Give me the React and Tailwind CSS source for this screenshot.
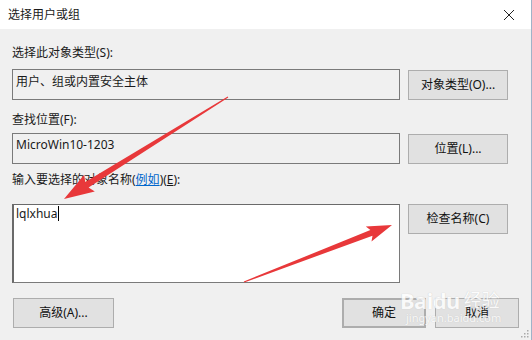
import React from "react";

const font = { fontFamily: "'Noto Sans', 'Noto Sans CJK SC', sans-serif" };

function arrowPoints(tail, tip, headLen, headHalf, shaftTail, shaftHead) {
  const dx = tip[0] - tail[0];
  const dy = tip[1] - tail[1];
  const len = Math.hypot(dx, dy);
  const ux = dx / len;
  const uy = dy / len;
  const px = -uy;
  const py = ux;
  const bx = tip[0] - ux * headLen;
  const by = tip[1] - uy * headLen;
  const pts = [
    [tail[0] + px * shaftTail, tail[1] + py * shaftTail],
    [bx + px * shaftHead, by + py * shaftHead],
    [bx + px * headHalf - ux * 3, by + py * headHalf - uy * 3],
    tip,
    [bx - px * headHalf - ux * 3, by - py * headHalf - uy * 3],
    [bx - px * shaftHead, by - py * shaftHead],
    [tail[0] - px * shaftTail, tail[1] - py * shaftTail],
  ];
  return pts.map((p) => p.map((n) => n.toFixed(1)).join(",")).join(" ");
}

function Button({ children, className = "" }) {
  return (
    <div
      className={`flex items-center justify-center h-[30px] bg-[#e1e1e1] border border-[#adadad] text-[12px] text-[#111] ${className}`}
    >
      {children}
    </div>
  );
}

export default function App() {
  return (
    <div
      className="relative w-[532px] h-[340px] bg-[#f0f0f0] border-r border-[#9fb3c8] overflow-hidden text-[#1a1a1a]"
      style={font}
    >
      {/* title bar */}
      <div className="h-[29px] bg-white flex items-center justify-between pl-2 pr-[10px]">
        <span className="text-[12px] leading-4">选择用户或组</span>
        <svg width="12" height="12" viewBox="0 0 12 12" className="mr-[6px]">
          <path d="M1 1L11 11M11 1L1 11" stroke="#222" strokeWidth="1" />
        </svg>
      </div>

      <div className="px-3">
        <div className="mt-4 h-4 text-[12px] leading-4">选择此对象类型(S):</div>
        <div className="mt-2 flex gap-2">
          <div className="w-[388px] h-[31px] border border-[#7a7a7a] bg-[#f0f0f0] pl-[3px] pt-[4px] text-[12px] leading-4">
            用户、组或内置安全主体
          </div>
          <Button className="w-[100px] mt-px">对象类型(O)...</Button>
        </div>

        <div className="mt-3 h-4 text-[12px] leading-4">查找位置(F):</div>
        <div className="mt-[5px] flex gap-2">
          <div className="w-[388px] h-[31px] border border-[#7a7a7a] bg-[#f0f0f0] pl-[3px] pt-[3px] text-[12px] leading-4">
            MicroWin10-1203
          </div>
          <Button className="w-[100px] mt-px">位置(L)...</Button>
        </div>

        <div className="mt-2 h-4 text-[12px] leading-4">
          输入要选择的对象名称(
          <span className="text-[#0066cc] underline">例如</span>
          )(<span className="underline">E</span>):
        </div>
        <div className="mt-4 flex gap-2">
          <div className="w-[388px] h-[79px] border border-[#7a7a7a] border-t-[#6a6a6a] border-l-[2px] border-l-[#6a6a6a] bg-white pl-[2px] pt-px text-[12px] leading-4 flex items-start">
            <span>lqlxhua</span>
            <span className="inline-block w-px h-[15px] bg-black ml-px" />
          </div>
          <Button className="w-[100px]">检查名称(C)</Button>
        </div>

        <div className="mt-[15px] flex items-start">
          <Button className="w-[101px] ml-px">高级(A)...</Button>
          <div className="flex-1" />
          <Button className="w-[84px] border-2 border-[#0078d7]">确定</Button>
          <Button className="w-[84px] ml-[9px]">取消</Button>
        </div>
      </div>

      {/* watermark */}
      <div className="absolute left-[400px] top-[288px] pointer-events-none select-none text-white opacity-80">
        <div className="flex items-end gap-1">
          <span className="text-[22px] font-bold leading-6 tracking-tight [text-shadow:0_0_1px_#bbb]">
            Baidu
          </span>
          <span className="text-[18px] leading-6 [text-shadow:0_0_1px_#bbb]">经验</span>
        </div>
        <div className="text-[11px] leading-3 ml-[6px] [text-shadow:0_0_1px_#bbb]">jingyan.baidu.com</div>
      </div>

      {/* resize grip */}
      <svg width="8" height="8" className="absolute right-[2px] bottom-[2px]">
        <rect x="6" y="0" width="1.5" height="1.5" fill="#aaa" />
        <rect x="3" y="3" width="1.5" height="1.5" fill="#aaa" />
        <rect x="6" y="3" width="1.5" height="1.5" fill="#aaa" />
        <rect x="0" y="6" width="1.5" height="1.5" fill="#aaa" />
        <rect x="3" y="6" width="1.5" height="1.5" fill="#aaa" />
        <rect x="6" y="6" width="1.5" height="1.5" fill="#aaa" />
      </svg>

      {/* red arrows */}
      <svg width="532" height="340" className="absolute left-0 top-0 pointer-events-none">
        <polygon points={arrowPoints([228, 97], [64, 199], 27, 10, 0.6, 3.2)} fill="#e8383a" />
        <polygon points={arrowPoints([244, 282], [392, 225], 22, 8, 0.6, 3)} fill="#e8383a" />
      </svg>
    </div>
  );
}
